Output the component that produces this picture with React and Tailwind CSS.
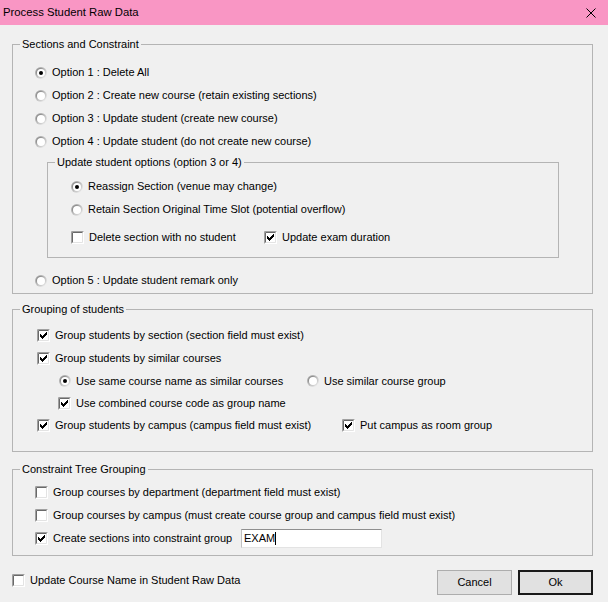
import React from "react";

const CHECK_COLS = [[3, 5], [4, 6], [5, 7], [6, 6], [7, 5], [8, 4], [9, 3]];

function Box({ checked }) {
  return (
    <svg width="13" height="13" viewBox="0 0 13 13" className="shrink-0">
      <rect x="0" y="0" width="13" height="13" fill="#ffffff" />
      <path d="M0.5 12.5 H12.5 V0.5" stroke="#ffffff" fill="none" />
      <path d="M1.5 11.5 H11.5 V1.5" stroke="#e3e3e3" fill="none" />
      <path d="M0.5 12.5 V0.5 H12.5" stroke="#a0a0a0" fill="none" />
      <path d="M1.5 11.5 V1.5 H11.5" stroke="#696969" fill="none" />
      {checked &&
        CHECK_COLS.map(([x, y]) => (
          <rect key={x} x={x} y={y} width="1" height="3" fill="#000" />
        ))}
    </svg>
  );
}

function Dot({ checked }) {
  return (
    <svg width="12" height="12" viewBox="0 0 12 12" className="shrink-0">
      <defs>
        <linearGradient id="rgo" x1="0" y1="0" x2="1" y2="1">
          <stop offset="0" stopColor="#9a9a9a" />
          <stop offset="0.55" stopColor="#c8c8c8" />
          <stop offset="1" stopColor="#ffffff" />
        </linearGradient>
        <linearGradient id="rgi" x1="0" y1="0" x2="1" y2="1">
          <stop offset="0" stopColor="#6a6a6a" />
          <stop offset="0.55" stopColor="#bdbdbd" />
          <stop offset="1" stopColor="#e6e6e6" />
        </linearGradient>
      </defs>
      <circle cx="6" cy="6" r="6" fill="url(#rgo)" />
      <circle cx="6" cy="6" r="5" fill="url(#rgi)" />
      <circle cx="6" cy="6" r="4" fill="#ffffff" />
      {checked && <circle cx="6" cy="6" r="2" fill="#000000" />}
    </svg>
  );
}

function Check({ checked, children, className = "" }) {
  return (
    <div className={`flex items-center ${className}`}>
      <Box checked={checked} />
      <span className="ml-[5px] whitespace-nowrap">{children}</span>
    </div>
  );
}

function Radio({ checked, children, className = "" }) {
  return (
    <div className={`flex items-center ${className}`}>
      <Dot checked={checked} />
      <span className="ml-[5px] whitespace-nowrap">{children}</span>
    </div>
  );
}

function Group({ label, className = "", bodyClass = "", children }) {
  return (
    <fieldset className={`border border-[#b4b4b4] ${className}`}>
      <legend className="ml-[7px] px-[2px] leading-[14px] whitespace-nowrap">{label}</legend>
      <div className={bodyClass}>{children}</div>
    </fieldset>
  );
}

export default function App() {
  return (
    <div
      className="w-[608px] h-[602px] bg-[#f0f0f0] text-black text-[11px] overflow-hidden"
      style={{ fontFamily: '"Liberation Sans", Arial, sans-serif' }}
    >
      <div className="h-[25px] bg-[#f996c4] flex items-center justify-between pl-[3px] pr-[12px]">
        <span className="text-[11.3px] whitespace-nowrap">Process Student Raw Data</span>
        <svg width="10" height="10" viewBox="0 0 10 10">
          <path d="M0.5 0.5 L9.5 9.5 M9.5 0.5 L0.5 9.5" stroke="#000" strokeWidth="1" />
        </svg>
      </div>

      <div className="pl-[12px] pr-[15px]">
        <Group label="Sections and Constraint" className="mt-[12px]" bodyClass="pl-[22px] pt-[10px] pb-[1px]">
          <Radio checked className="h-[23px]">Option 1 : Delete All</Radio>
          <Radio className="h-[23px]">Option 2 : Create new course (retain existing sections)</Radio>
          <Radio className="h-[23px]">Option 3 : Update student (create new course)</Radio>
          <Radio className="h-[23px]">Option 4 : Update student (do not create new course)</Radio>

          <Group
            label="Update student options (option 3 or 4)"
            className="mt-[2px] ml-[12px] w-[512px]"
            bodyClass="pl-[23px] pt-[6px] pb-[8px]"
          >
            <Radio checked className="h-[23px]">Reassign Section (venue may change)</Radio>
            <Radio className="h-[23px]">Retain Section Original Time Slot (potential overflow)</Radio>
            <div className="flex h-[23px] mt-[5px]">
              <Check className="w-[193px]">Delete section with no student</Check>
              <Check checked>Update exam duration</Check>
            </div>
          </Group>

          <Radio className="h-[23px] mt-[11px]">Option 5 : Update student remark only</Radio>
        </Group>

        <Group label="Grouping of students" className="mt-[8px]" bodyClass="pl-[24px] pt-[8px] pb-[14px]">
          <Check checked className="h-[23px]">Group students by section (section field must exist)</Check>
          <Check checked className="h-[23px]">Group students by similar courses</Check>
          <div className="flex h-[22px] pl-[22px]">
            <Radio checked className="w-[248px]">Use same course name as similar courses</Radio>
            <Radio>Use similar course group</Radio>
          </div>
          <Check checked className="h-[22px] pl-[21px]">Use combined course code as group name</Check>
          <div className="flex h-[23px]">
            <Check checked className="w-[305px]">Group students by campus (campus field must exist)</Check>
            <Check checked>Put campus as room group</Check>
          </div>
        </Group>

        <Group label="Constraint Tree Grouping" className="mt-[10px]" bodyClass="pl-[22px] pt-[5px] pb-[6px]">
          <Check className="h-[23px]">Group courses by department (department field must exist)</Check>
          <Check className="h-[23px]">Group courses by campus (must create course group and campus field must exist)</Check>
          <div className="flex items-center h-[22px]">
            <Check checked className="w-[206px]">Create sections into constraint group</Check>
            <div className="w-[141px] h-[19px] bg-white border border-[#e3e3e3] border-t-[#8f8f8f] border-l-[#c0c0c0] flex items-center pl-[2px]">
              <span>EXAM</span>
              <span className="w-px h-[13px] bg-black" />
            </div>
          </div>
        </Group>
      </div>

      <div className="mt-[14px] pl-[12px] pr-[15px] flex justify-between">
        <Check className="h-[21px]">Update Course Name in Student Raw Data</Check>
        <div className="flex gap-[6px]">
          <button className="w-[75px] h-[25px] bg-[#e1e1e1] border border-[#adadad] text-[11px]">Cancel</button>
          <button className="w-[75px] h-[25px] bg-[#e1e1e1] border-2 border-[#1a1a1a] text-[11px]">Ok</button>
        </div>
      </div>
    </div>
  );
}
